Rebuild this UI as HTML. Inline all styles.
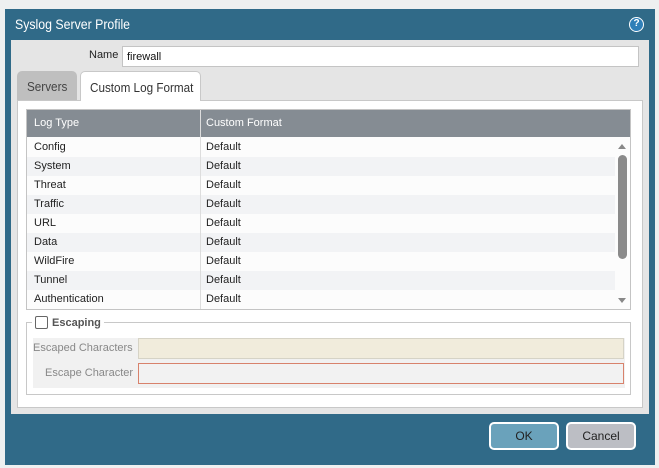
<!DOCTYPE html>
<html><head><style>
*{box-sizing:border-box;margin:0;padding:0}
body{width:659px;height:468px;background:#eef0f0;position:relative;overflow:hidden;font-family:"Liberation Sans",sans-serif;}
.a{position:absolute}
.dlg{left:5px;top:9px;width:650px;height:456px;background:#306a88}
.title{left:15px;top:16px;color:#fff;font-size:14px;transform:scaleX(0.88);transform-origin:0 0}
.help{left:629px;top:17px;width:15px;height:15px;border-radius:50%;background:#2f7fb8;border:1.5px solid #fff;color:#fff;font-size:10px;font-weight:bold;text-align:center;line-height:12px}
.body{left:11px;top:40px;width:638px;height:374px;background:#e5e5e5}
.name{left:89px;top:49px;font-size:11px;color:#222}
.nin{left:122px;top:46px;width:517px;height:21px;background:#fff;border:1px solid #c4c4c4;font-size:11px;padding:4px 4px;color:#111}
.tab1{left:17px;top:71px;width:60px;height:30px;background:#bfbfbf;border-radius:5px 5px 0 0}
.tab2{left:80px;top:71px;width:121px;height:30px;background:#fff;border:1px solid #c8c8c8;border-bottom:none;border-radius:5px 5px 0 0;z-index:2}
.tt{position:absolute;top:8px;font-size:13px;transform:scaleX(0.9);transform-origin:0 0;white-space:nowrap}
.panel{left:17px;top:100px;width:626px;height:308px;background:#fff;border:1px solid #c8c8c8}
.tbl{left:26px;top:109px;width:605px;height:201px;background:#fcfcfc;border:1px solid #c4c4c4}
.hdr{left:0;top:0;width:603px;height:27px;background:#858c93;color:#fff;font-size:11px;line-height:27px}
.row{position:absolute;left:0;width:588px;height:19px;font-size:11px;line-height:19px;color:#222}
.row.s{background:#f2f3f5}
.c1{position:absolute;left:7px}
.c2{position:absolute;left:179px}
.vd{position:absolute;left:173px;top:0;width:1px;height:199px;background:#ddd}
.fs{left:26px;top:322px;width:605px;height:73px;border:1px solid #c8c8c8}
.lg{left:32px;top:316px;background:#fff;padding:0 3px;font-size:11px;font-weight:bold;color:#555;display:flex;align-items:center}
.cb{width:13px;height:13px;border:1px solid #666;border-radius:2px;margin-right:4px;background:#fff}
.fa{left:33px;top:338px;width:592px;height:50px;background:#f1f1f1}
.l1{left:33px;top:342px;font-size:11px;color:#888}
.l2{left:45px;top:367px;font-size:11px;color:#888}
.i1{left:138px;top:338px;width:486px;height:21px;background:#f1ecdc;border:1px solid #d6d3c6}
.i2{left:138px;top:363px;width:486px;height:21px;background:#f2f2f2;border:1px solid #d8826c}
.btn{top:422px;width:70px;height:28px;border:2px solid #fff;border-radius:5px;font-size:12px;text-align:center;line-height:24px;color:#222}
</style></head><body>
<div class="a dlg"></div>
<div class="a title">Syslog Server Profile</div>
<div class="a help">?</div>
<div class="a body"></div>
<div class="a name">Name</div>
<div class="a nin">firewall</div>
<div class="a tab1"><span class="tt" style="left:10px;color:#444">Servers</span></div>
<div class="a tab2"><span class="tt" style="left:9px;color:#333">Custom Log Format</span></div>
<div class="a panel"></div>
<div class="a tbl">
 <div class="a hdr"><span class="c1">Log Type</span><span class="c2">Custom Format</span></div>
 <div class="row" style="top:28px"><span class="c1">Config</span><span class="c2">Default</span></div>
 <div class="row s" style="top:47px"><span class="c1">System</span><span class="c2">Default</span></div>
 <div class="row" style="top:66px"><span class="c1">Threat</span><span class="c2">Default</span></div>
 <div class="row s" style="top:85px"><span class="c1">Traffic</span><span class="c2">Default</span></div>
 <div class="row" style="top:104px"><span class="c1">URL</span><span class="c2">Default</span></div>
 <div class="row s" style="top:123px"><span class="c1">Data</span><span class="c2">Default</span></div>
 <div class="row" style="top:142px"><span class="c1">WildFire</span><span class="c2">Default</span></div>
 <div class="row s" style="top:161px"><span class="c1">Tunnel</span><span class="c2">Default</span></div>
 <div class="row" style="top:180px"><span class="c1">Authentication</span><span class="c2">Default</span></div>
 <div class="vd"></div>
 <div class="a" style="left:591px;top:34px;width:0;height:0;border-left:4px solid transparent;border-right:4px solid transparent;border-bottom:5px solid #888"></div>
 <div class="a" style="left:591px;top:45px;width:9px;height:104px;border-radius:5px;background:#8a8a8a"></div>
 <div class="a" style="left:591px;top:188px;width:0;height:0;border-left:4px solid transparent;border-right:4px solid transparent;border-top:5px solid #888"></div>
</div>
<div class="a fs"></div>
<div class="a lg"><div class="cb"></div>Escaping</div>
<div class="a fa"></div>
<div class="a l1">Escaped Characters</div>
<div class="a l2">Escape Character</div>
<div class="a i1"></div>
<div class="a i2"></div>
<div class="a btn" style="left:489px;background:#6aa2bb">OK</div>
<div class="a btn" style="left:566px;background:#bcbec4">Cancel</div>
</body></html>
